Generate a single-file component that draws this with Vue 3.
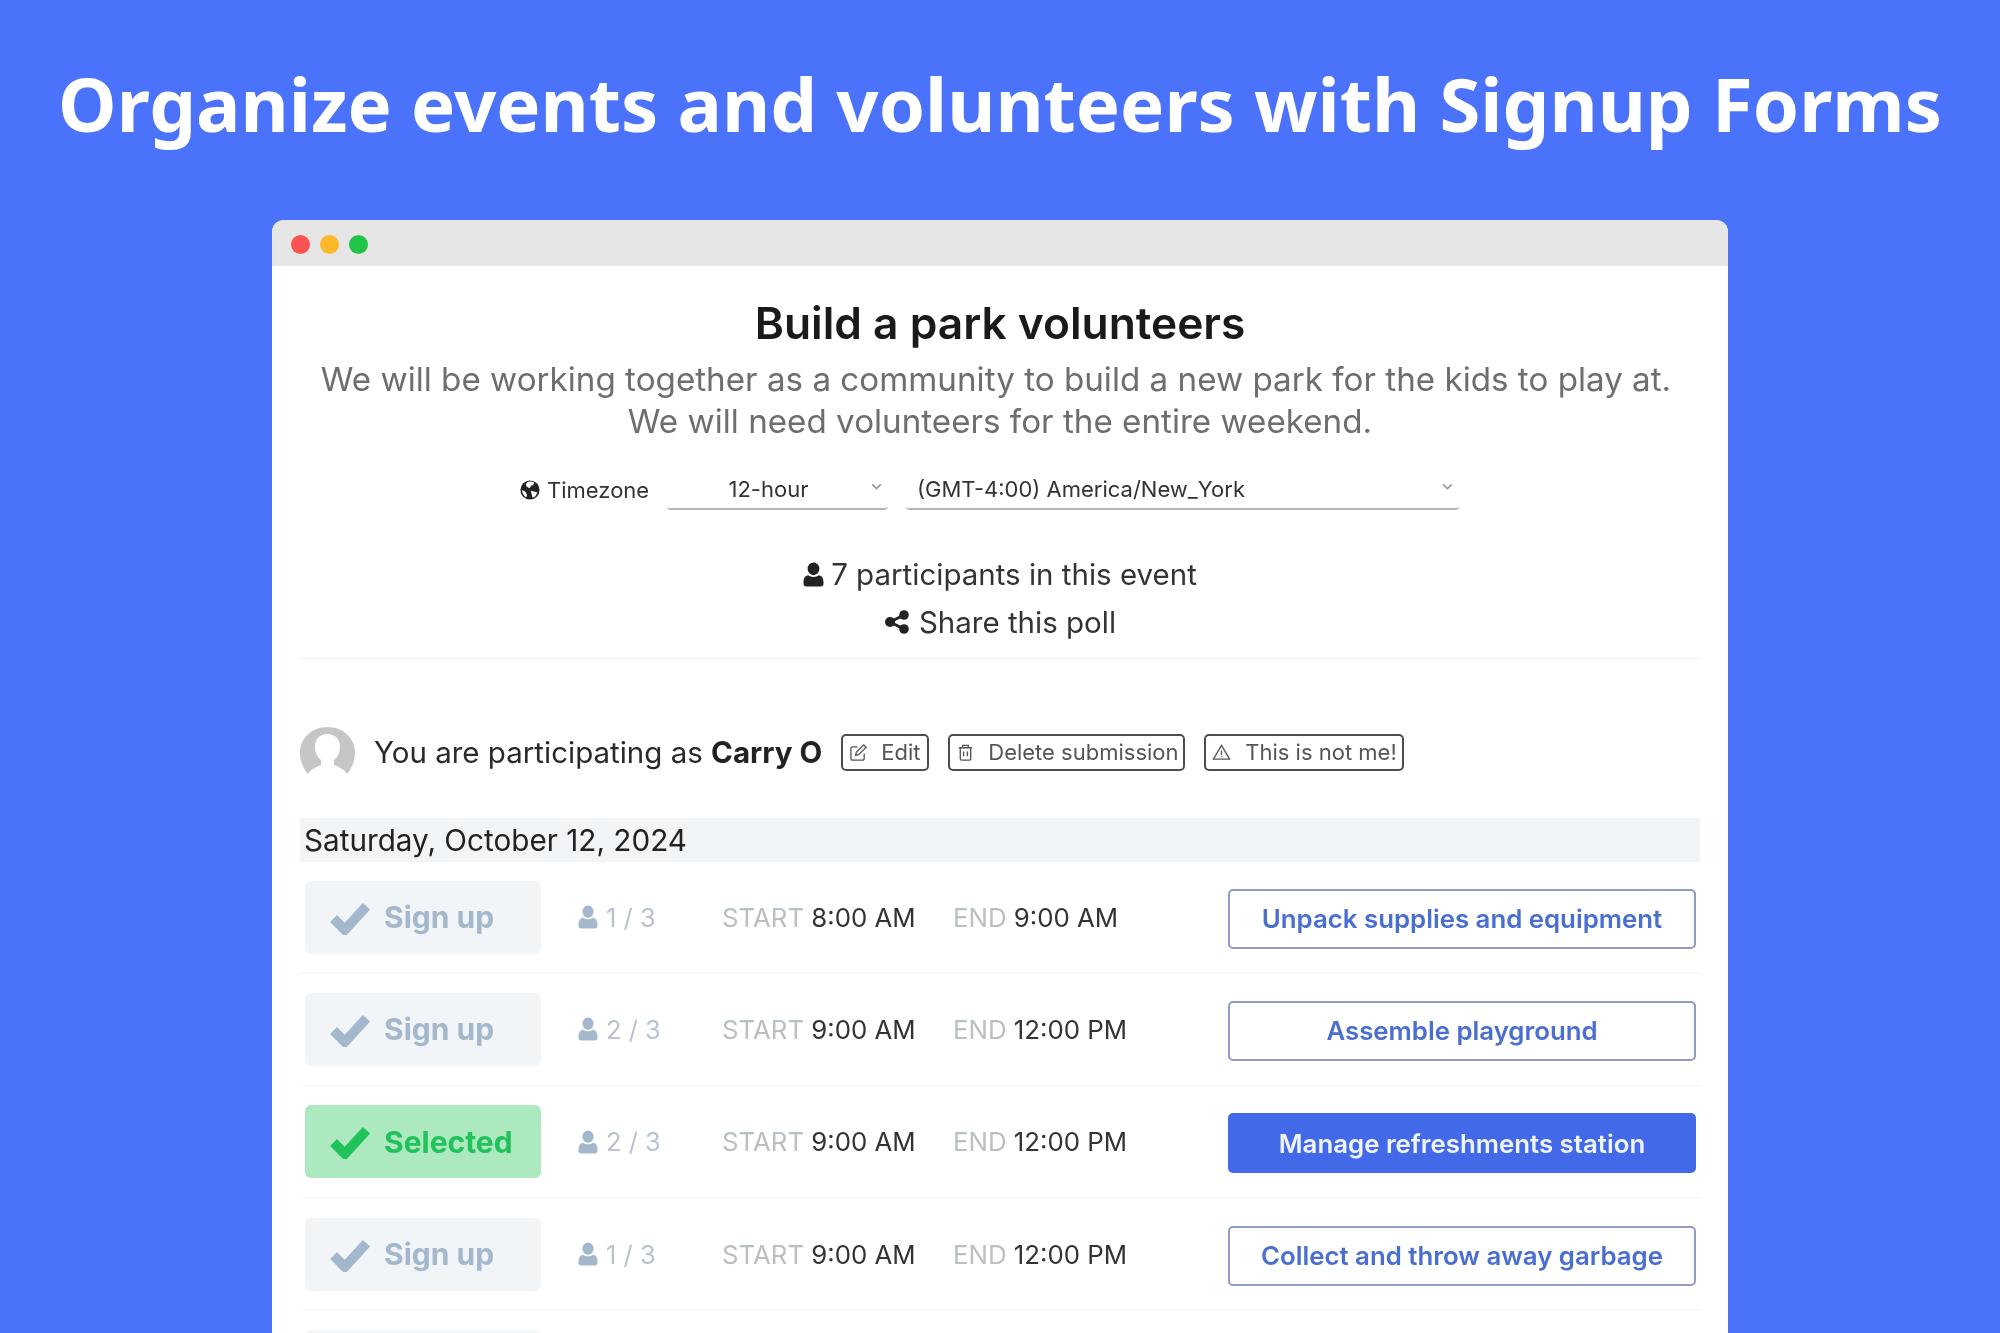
<script setup>
const rows = [
  { count: '1 / 3', start: '8:00 AM', end: '9:00 AM', task: 'Unpack supplies and equipment', selected: false },
  { count: '2 / 3', start: '9:00 AM', end: '12:00 PM', task: 'Assemble playground', selected: false },
  { count: '2 / 3', start: '9:00 AM', end: '12:00 PM', task: 'Manage refreshments station', selected: true },
  { count: '1 / 3', start: '9:00 AM', end: '12:00 PM', task: 'Collect and throw away garbage', selected: false },
]
const userPath = 'M12 1.5a5.6 5.6 0 0 1 5.6 6 5.6 5.6 0 0 1-11.200 0 5.600 5.600 0 0 1 5.600-6zM7 13.200c1.300 1 3 1.500 5 1.500s3.700-.5 5-1.500c2.800.3 4.500 2.500 4.500 6.300v1.700c0 1.500-1.100 2.300-2.500 2.300H5c-1.400 0-2.500-.8-2.500-2.300v-1.700c0-3.800 1.700-6 4.500-6.300z'
</script>

<template>
  <main class="page">
    <h1 class="headline">Organize events and volunteers with Signup Forms</h1>
    <section class="window">
      <div class="titlebar">
        <span class="dot red"></span>
        <span class="dot amber"></span>
        <span class="dot green"></span>
      </div>
      <div class="content">
        <h2 class="title">Build a park volunteers</h2>
        <p class="desc"><span class="desc-first">We will be working together as a community to build a new park for the kids to play at.</span><span class="desc-second">We will need volunteers for the entire weekend.</span></p>

        <div class="tz-row">
          <svg class="globe" viewBox="0 0 24 24"><circle cx="12" cy="12" r="11.500" fill="#222"/><path d="M9 2.500c3-1 6-.8 8 .5l-1 3-3 1-1 3-4-2-1-3zM13 13l5 1 3 1-3 5-3 1-1-4zM2.500 12l4 2 2 4-1 3c-3-2-5-5-5-9z" fill="#fff"/></svg>
          <span class="tz-label">Timezone</span>
          <div class="select hour"><span>12-hour</span><svg class="chev" viewBox="0 0 12 8"><path d="M2 2l4 4 4-4" fill="none" stroke="#999" stroke-width="1.500"/></svg></div>
          <div class="select zone"><span>(GMT-4:00) America/New_York</span><svg class="chev" viewBox="0 0 12 8"><path d="M2 2l4 4 4-4" fill="none" stroke="#999" stroke-width="1.500"/></svg></div>
        </div>

        <div class="info first">
          <svg class="info-user" viewBox="2 1 20 23" preserveAspectRatio="none"><path :d="userPath" fill="#222"/></svg>
          <span>7 participants in this event</span>
        </div>
        <div class="info second">
          <svg class="info-share" viewBox="0 0 26 24"><g fill="#222"><circle cx="20" cy="5" r="4.800"/><circle cx="20" cy="19" r="4.800"/><circle cx="6" cy="12" r="5"/></g><path d="M20 5L6 12l14 7" fill="none" stroke="#222" stroke-width="3"/></svg>
          <span>Share this poll</span>
        </div>
        <div class="divider"></div>

        <div class="me-row">
          <svg class="avatar" viewBox="0 0 55 50">
            <path d="M27.500 0C12 0 0 11 0 26c0 8 3 15 8 21 3-5 8-7 13-9v-5c-4-3-6-8-6-13 0-8 5-13 12.500-13S40 12 40 20c0 5-2 10-6 13v5c5 2 10 4 13 9 5-6 8-13 8-21C55 11 43 0 27.500 0z" fill="#c6c6c6"/>
          </svg>
          <span class="me-text">You are participating as <b>Carry O</b></span>
          <span class="chip edit">
            <svg viewBox="0 0 20 20"><path d="M16 11v5a2 2 0 0 1-2 2H4a2 2 0 0 1-2-2V6a2 2 0 0 1 2-2h5M7 13l.7-3.300L15.500 2l2.500 2.500-7.800 7.800z" fill="none" stroke="#555" stroke-width="1.400"/></svg>
            Edit
          </span>
          <span class="chip del">
            <svg viewBox="0 0 20 20"><path d="M3 5h14M7 5V2.500h6V5M4.500 5v11.500a1.500 1.500 0 0 0 1.500 1.500h8a1.500 1.500 0 0 0 1.500-1.500V5M8 9v5M12 9v5" fill="none" stroke="#555" stroke-width="1.400"/></svg>
            Delete submission
          </span>
          <span class="chip warn">
            <svg viewBox="0 0 20 20"><path d="M10 2.500L18.500 17h-17zM10 8v4.500M10 14v1" fill="none" stroke="#555" stroke-width="1.400"/></svg>
            This is not me!
          </span>
        </div>

        <div class="date">Saturday, October 12, 2024</div>

        <div v-for="r in rows" :key="r.task" class="row">
          <div class="signup" :class="{ on: r.selected }">
            <svg class="check" viewBox="0 0 42 34"><path d="M5 18l11 11L37 6" fill="none" stroke="currentColor" stroke-width="9.500"/></svg>
            <span>{{ r.selected ? 'Selected' : 'Sign up' }}</span>
          </div>
          <div class="count">
            <svg class="count-user" viewBox="2 1 20 23" preserveAspectRatio="none"><path :d="userPath" fill="#a3b8cd"/></svg>
            <span>{{ r.count }}</span>
          </div>
          <div class="time"><span class="lbl">START</span> <span class="val">{{ r.start }}</span></div>
          <div class="time"><span class="lbl">END</span> <span class="val">{{ r.end }}</span></div>
          <div class="task" :class="{ on: r.selected }">{{ r.task }}</div>
        </div>
        <div class="row"><div class="signup"></div></div>
      </div>
    </section>
  </main>
</template>

<style>
html, body { margin: 0; background: #4a72fb; }
</style>

<style scoped>
.page {
  height: 1333px;
  overflow: hidden;
  background: #4a72fb;
  display: flex;
  flex-direction: column;
  align-items: center;
  font-family: Inter, "Liberation Sans", sans-serif;
}
.headline {
  margin: 0;
  padding-top: 54px;
  height: 220px;
  flex: none;
  box-sizing: border-box;
  font: 700 74.200px/100px "Noto Sans", sans-serif;
  color: #fff;
  white-space: nowrap;
}
.window {
  width: 1456px;
  flex: none;
  background: #fff;
  border-radius: 12px 12px 0 0;
  overflow: hidden;
}
.titlebar {
  height: 46px;
  box-sizing: border-box;
  padding-top: 2px;
  background: #e6e6e6;
  display: flex;
  align-items: center;
  gap: 10px;
  padding-left: 19px;
}
.dot { width: 19px; height: 19px; border-radius: 50%; }
.red { background: #fb5252; }
.amber { background: #fdb92a; }
.green { background: #22c447; }
.content {
  padding: 0 28px;
  text-align: center;
  filter: blur(0.6px);
}
.title {
  margin: 0;
  padding-top: 31px;
  font-size: 44.300px;
  line-height: 52px;
  font-weight: 600;
  color: #1a1a1a;
}
.desc {
  margin: 0;
  padding-top: 9px;
  font-size: 33.200px;
  line-height: 42px;
  color: #6e6e6e;
}
.desc-first { display: block; padding-right: 8px; }
.desc-second { display: block; }
.tz-row {
  display: flex;
  align-items: center;
  height: 40px;
  margin-top: 28px;
  padding-left: 220px;
  color: #333;
  font-size: 22px;
}
.globe { width: 20px; height: 20px; margin-right: 7px; }
.tz-label { width: 120px; text-align: left; }
.select {
  height: 40px;
  border-bottom: 2px solid #b4b4b4;
  box-sizing: border-box;
  display: flex;
  align-items: center;
  position: relative;
  border-radius: 0 0 4px 4px;
}
.hour { width: 221px; margin-right: 18px; justify-content: center; padding-right: 18px; }
.zone { width: 553px; padding-left: 11px; }
.chev { width: 13px; height: 9px; position: absolute; right: 5px; top: 12px; }
.info {
  display: flex;
  align-items: center;
  justify-content: center;
  font-size: 29.500px;
  line-height: 48px;
  color: #333;
}
.first { margin-top: 40px; }
.info-user { width: 21px; height: 25px; margin-right: 7px; }
.info-share { width: 26px; height: 24px; margin-right: 9px; }
.divider { border-top: 1px solid #f1f1f1; margin-top: 12px; }
.me-row {
  display: flex;
  align-items: center;
  height: 50px;
  margin-top: 68px;
}
.avatar { width: 55px; height: 50px; margin-right: 19px; }
.me-text { font-size: 29.500px; color: #2a2a2a; margin-right: 19px; white-space: nowrap; }
.me-text b { font-weight: 700; color: #222; }
.chip {
  box-sizing: border-box;
  height: 37px;
  border: 2px solid #4d4d4d;
  border-radius: 5px;
  display: flex;
  align-items: center;
  font-size: 22px;
  color: #555;
  margin-right: 19px;
  white-space: nowrap;
}
.chip svg { width: 19px; height: 19px; margin-left: 6px; flex: none; }
.edit { width: 88px; gap: 13px; }
.del { width: 237px; gap: 13px; }
.warn { width: 200px; gap: 14px; }
.date {
  margin-top: 41px;
  height: 44px;
  background: #f1f5f8;
  text-align: left;
  padding-left: 4px;
  font-size: 29.700px;
  line-height: 44px;
  color: #222;
}
.row {
  box-sizing: border-box;
  height: 112.300px;
  display: grid;
  grid-template-columns: 236px 181px 231px 275px 468px;
  align-items: center;
  padding: 0 4px 0 5px;
  border-bottom: 2px solid #f9f9f9;
}
.signup {
  height: 73px;
  background: #f1f5f8;
  border-radius: 6px;
  display: flex;
  align-items: center;
  padding-left: 23px;
  gap: 12px;
  color: #a3b8cd;
  font-size: 30px;
  font-weight: 700;
}
.signup.on { background: #ade9bf; color: #22c25a; }
.check { width: 44px; height: 35px; flex: none; }
.count {
  display: flex;
  align-items: center;
  padding-left: 37px;
  gap: 8px;
  font-size: 25.500px;
  color: #b8c3cf;
}
.count-user { width: 20px; height: 24px; flex: none; }
.time { text-align: left; font-size: 25.800px; white-space: nowrap; }
.lbl { color: #b9bfc6; }
.val { color: #333; }
.task {
  box-sizing: border-box;
  height: 60px;
  margin-top: 3px;
  border: 2px solid #8f9dc6;
  border-radius: 5px;
  display: flex;
  align-items: center;
  justify-content: center;
  font-size: 25.800px;
  font-weight: 600;
  color: #4a6fd0;
}
.task.on { background: #4169e8; border-color: #4169e8; color: #f0f4ff; }
</style>
